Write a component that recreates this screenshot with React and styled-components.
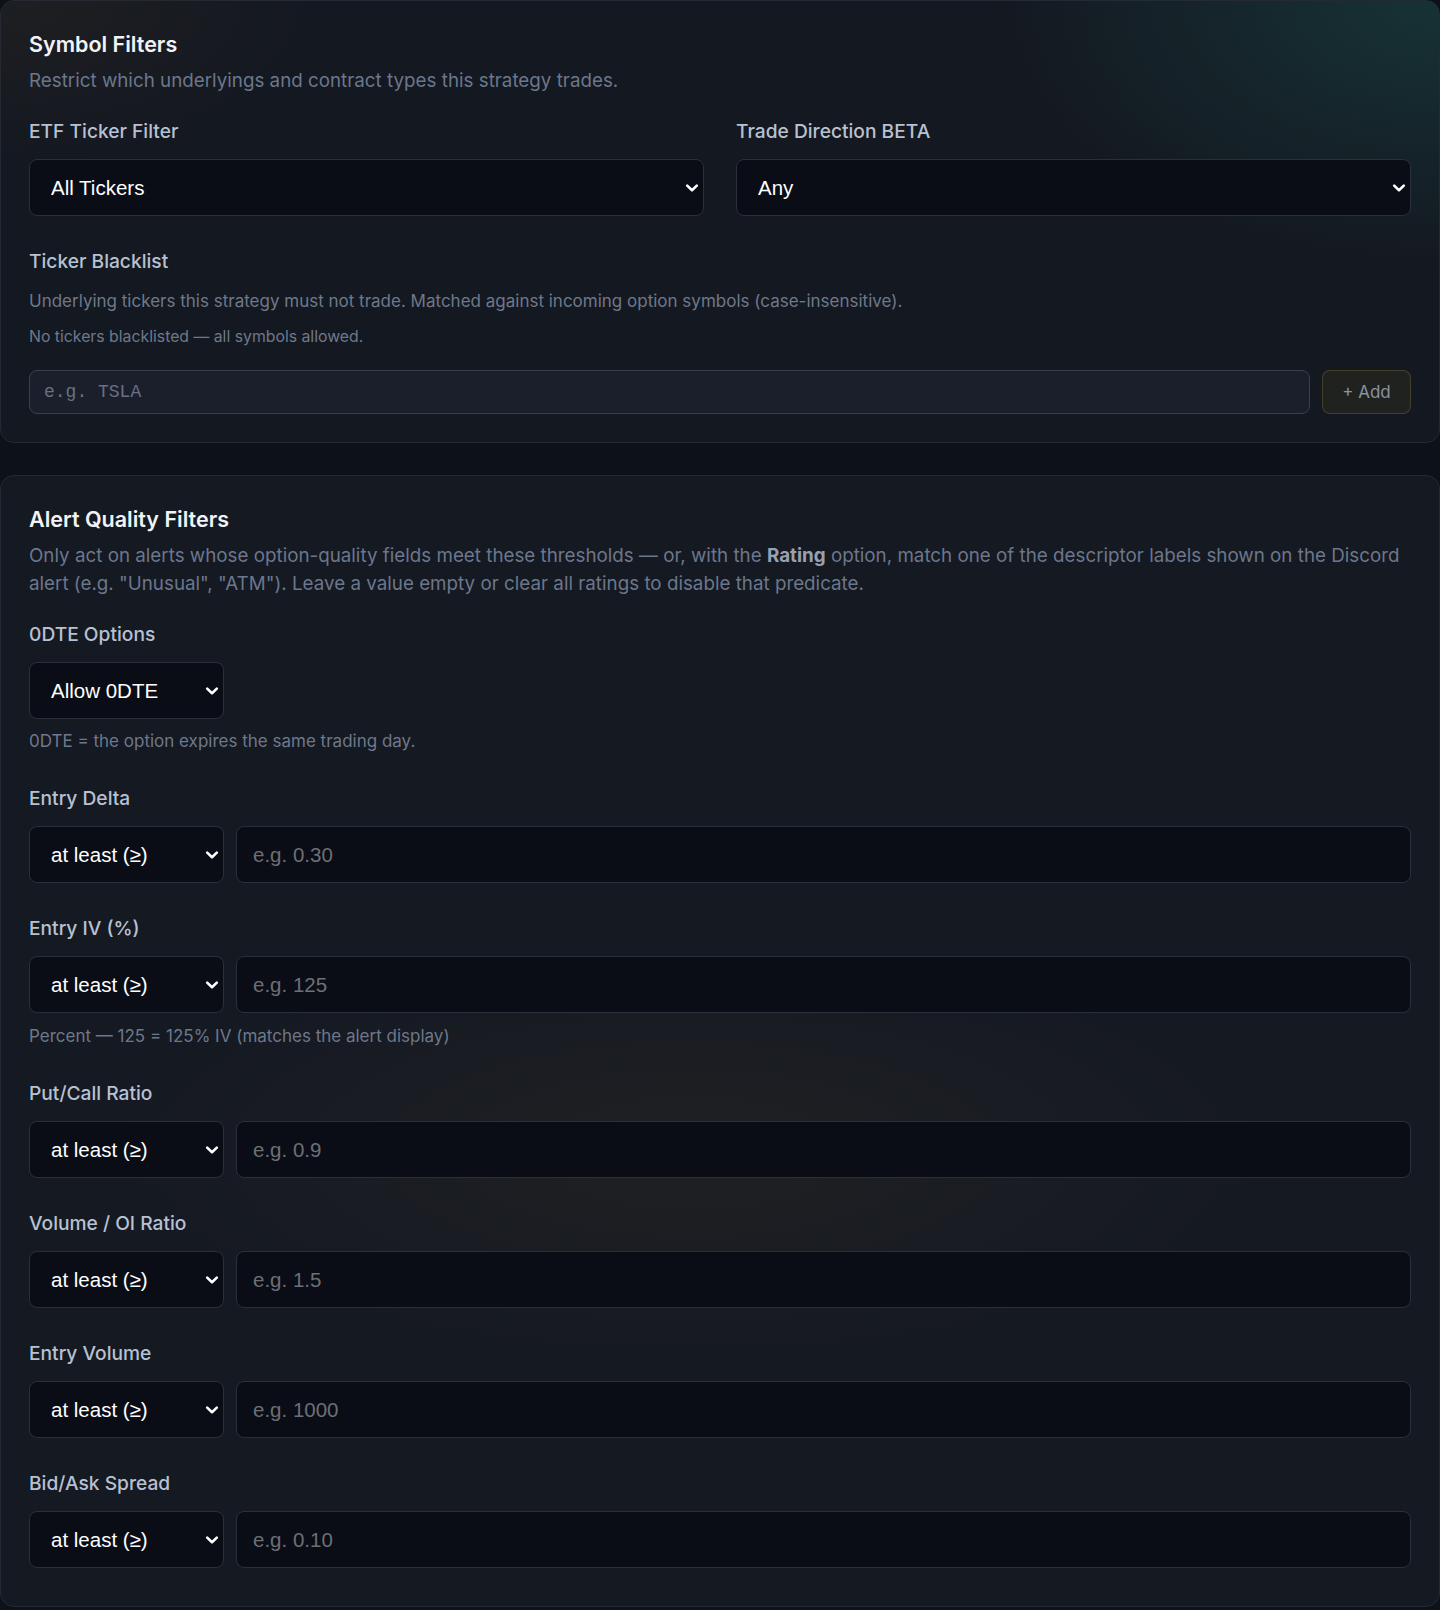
import React from 'react';
import styled, { createGlobalStyle } from 'styled-components';

const GlobalStyle = createGlobalStyle`
  html, body {
    margin: 0;
    padding: 0;
    background: #0d1118;
    color-scheme: dark;
  }

  body {
    font-family: 'Inter', 'Liberation Sans', sans-serif;
    -webkit-font-smoothing: antialiased;
  }
`;

const Page = styled.div`
  width: 1440px;
  display: flex;
  flex-direction: column;
  gap: 32px;
`;

const Card = styled.section`
  box-sizing: border-box;
  width: 100%;
  padding: 28px 28px ${(p) => (p.$tall ? '38px' : '28px')};
  border: 1px solid #242a34;
  border-radius: 14px;
  background: ${(p) =>
    p.$tone === 'teal'
      ? `radial-gradient(ellipse 600px 360px at 100% 0%, rgba(24, 68, 68, 0.6), transparent 75%),
         radial-gradient(ellipse 400px 200px at 0% 0%, rgba(60, 52, 40, 0.25), transparent 80%),
         #141820`
      : `radial-gradient(ellipse 720px 260px at 48% 60%, rgba(86, 72, 40, 0.16), transparent 80%),
         #151922`};
`;

const Title = styled.h2`
  margin: 0;
  font-size: 21.5px;
  line-height: 30px;
  font-weight: 600;
  color: #f1f3f6;
`;

const Intro = styled.p`
  margin: 8px 0 0;
  font-size: 18.8px;
  line-height: 28px;
  color: #6b778c;

  strong {
    color: #98a1b1;
    font-weight: 700;
  }
`;

const Body = styled.div`
  margin-top: 24px;
  display: flex;
  flex-direction: column;
  gap: 33px;
`;

const TwoCol = styled.div`
  display: grid;
  grid-template-columns: 1fr 1fr;
  gap: 32px;
`;

const Field = styled.div`
  display: flex;
  flex-direction: column;
`;

const Label = styled.label`
  font-size: 19.2px;
  line-height: 24px;
  font-weight: 500;
  color: #b7c1d2;
  margin-bottom: 16px;
`;

const Hint = styled.div`
  font-size: ${(p) => (p.$small ? '15.8px' : '17px')};
  line-height: ${(p) => (p.$small ? '20px' : '24px')};
  color: #6e788b;
  margin-top: ${(p) => p.$mt || 0}px;
`;

const SelectWrap = styled.div`
  position: relative;
  flex: none;
  width: ${(p) => (p.$w ? `${p.$w}px` : '100%')};

  svg {
    position: absolute;
    right: 5px;
    top: 50%;
    transform: translateY(-50%);
    pointer-events: none;
  }
`;

const Select = styled.select`
  box-sizing: border-box;
  appearance: none;
  height: 57px;
  width: 100%;
  padding: 0 30px 0 21px;
  border: 1px solid #2a303b;
  border-radius: 8px;
  background: #0a0d15;
  color: #ffffff;
  font-family: 'Liberation Sans', Arial, sans-serif;
  font-size: 20.5px;
  outline: none;
`;

const NumberInput = styled.input`
  box-sizing: border-box;
  flex: 1;
  min-width: 0;
  height: 57px;
  padding: 0 16px;
  border: 1px solid #2a303b;
  border-radius: 8px;
  background: #0a0d15;
  color: #ffffff;
  font-family: 'Liberation Sans', Arial, sans-serif;
  font-size: 20.5px;
  outline: none;

  &::placeholder {
    color: #6c6f76;
  }
`;

const Row = styled.div`
  display: flex;
  gap: 12px;
  margin-top: ${(p) => p.$mt || 0}px;
`;

const TickerInput = styled.input`
  box-sizing: border-box;
  flex: 1;
  height: 44px;
  padding: 0 14px;
  border: 1px solid #394050;
  border-radius: 8px;
  background: #1b1f2b;
  color: #e5e7eb;
  font-family: 'Liberation Mono', monospace;
  font-size: 18px;
  outline: none;

  &::placeholder {
    color: #687183;
  }
`;

const AddButton = styled.button`
  box-sizing: border-box;
  width: 89px;
  height: 44px;
  border: 1px solid rgba(150, 125, 50, 0.32);
  border-radius: 8px;
  background: #20221f;
  color: #8a92a2;
  font-family: 'Inter', sans-serif;
  font-size: 17px;
  cursor: pointer;
`;

const Chevron = () => (
  <svg width="14" height="10" viewBox="0 0 14 10" aria-hidden="true">
    <path d="M2.2 2.6 7 7.2l4.8-4.6" fill="none" stroke="#ffffff" strokeWidth="2.6" strokeLinecap="round" strokeLinejoin="round" />
  </svg>
);

const Dropdown = ({ w, options, value }) => (
  <SelectWrap $w={w}>
    <Select defaultValue={value}>
      {options.map((o) => (
        <option key={o}>{o}</option>
      ))}
    </Select>
    <Chevron />
  </SelectWrap>
);

const comparators = ['at least (≥)', 'at most (≤)'];

const thresholds = [
  { label: 'Entry Delta', placeholder: 'e.g. 0.30' },
  {
    label: 'Entry IV (%)',
    placeholder: 'e.g. 125',
    hint: 'Percent — 125 = 125% IV (matches the alert display)',
  },
  { label: 'Put/Call Ratio', placeholder: 'e.g. 0.9' },
  { label: 'Volume / OI Ratio', placeholder: 'e.g. 1.5' },
  { label: 'Entry Volume', placeholder: 'e.g. 1000' },
  { label: 'Bid/Ask Spread', placeholder: 'e.g. 0.10' },
];

const App = () => (
  <Page>
    <GlobalStyle />

    <Card $tone="teal">
      <Title>Symbol Filters</Title>
      <Intro>Restrict which underlyings and contract types this strategy trades.</Intro>

      <Body>
        <TwoCol>
          <Field>
            <Label>ETF Ticker Filter</Label>
            <Dropdown options={['All Tickers', 'ETFs Only', 'Stocks Only']} value="All Tickers" />
          </Field>
          <Field>
            <Label>Trade Direction BETA</Label>
            <Dropdown options={['Any', 'Calls Only', 'Puts Only']} value="Any" />
          </Field>
        </TwoCol>

        <Field>
          <Label>Ticker Blacklist</Label>
          <Hint>
            Underlying tickers this strategy must not trade. Matched against incoming option
            symbols (case-insensitive).
          </Hint>
          <Hint $small $mt={14}>No tickers blacklisted — all symbols allowed.</Hint>
          <Row $mt={23}>
            <TickerInput placeholder="e.g. TSLA" />
            <AddButton type="button">+ Add</AddButton>
          </Row>
        </Field>
      </Body>
    </Card>

    <Card $tall>
      <Title>Alert Quality Filters</Title>
      <Intro>
        Only act on alerts whose option-quality fields meet these thresholds — or, with the{' '}
        <strong>Rating</strong> option, match one of the descriptor labels shown on the Discord
        alert (e.g. "Unusual", "ATM"). Leave a value empty or clear all ratings to disable that
        predicate.
      </Intro>

      <Body>
        <Field>
          <Label>0DTE Options</Label>
          <Dropdown w={195} options={['Allow 0DTE', 'Block 0DTE', 'Only 0DTE']} value="Allow 0DTE" />
          <Hint $mt={10}>0DTE = the option expires the same trading day.</Hint>
        </Field>

        {thresholds.map((t) => (
          <Field key={t.label}>
            <Label>{t.label}</Label>
            <Row>
              <Dropdown w={195} options={comparators} value={comparators[0]} />
              <NumberInput placeholder={t.placeholder} inputMode="decimal" />
            </Row>
            {t.hint && <Hint $mt={11}>{t.hint}</Hint>}
          </Field>
        ))}
      </Body>
    </Card>
  </Page>
);

export default App;
